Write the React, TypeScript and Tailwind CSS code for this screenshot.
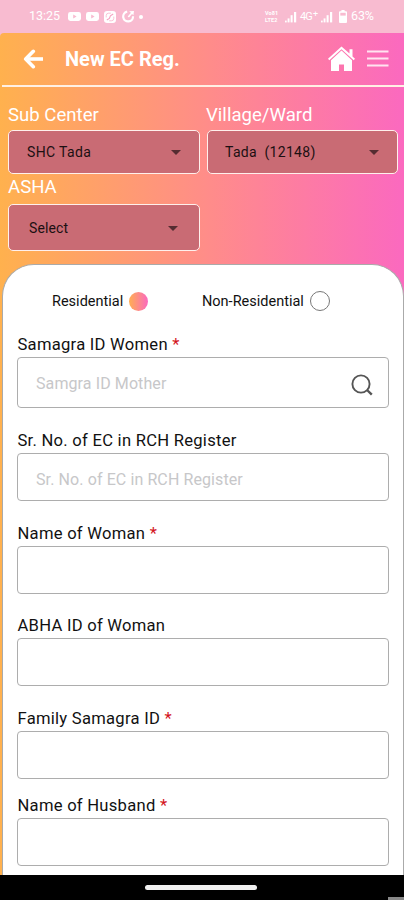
import React from "react";

function Signal({ className }: { className: string }) {
  return (
    <svg className={className} viewBox="0 0 12 12" fill="white">
      <rect x="0" y="9.6" width="1.7" height="1.8" />
      <rect x="2.6" y="7.4" width="1.9" height="4" />
      <rect x="5.6" y="4.2" width="2" height="7.2" />
      <rect x="9" y="1" width="2.2" height="10.4" />
    </svg>
  );
}

function YouTube({ className }: { className: string }) {
  return (
    <svg className={className} viewBox="0 0 13 9">
      <rect width="13" height="9" rx="2.4" fill="white" />
      <path d="M5.2 2.6 8.6 4.5 5.2 6.4Z" fill="#f8bbd0" />
    </svg>
  );
}

function StatusBar() {
  return (
    <div className="flex h-[33px] shrink-0 items-center bg-[#f8bbd0] pl-[29px] text-white">
      <span className="w-[39px] text-[12.5px] leading-none">13:25</span>
      <YouTube className="h-[9px] w-[13px]" />
      <YouTube className="ml-[5px] h-[9px] w-[13px]" />
      <svg className="ml-[5px] h-3 w-3" viewBox="0 0 12 12" fill="none">
        <rect width="12" height="12" rx="3.2" fill="white" />
        <path d="M2.2 6.4V4.6Q2.2 2.2 4.6 2.2H6.8M9.8 5.6v1.8Q9.8 9.8 7.4 9.8H5.2" stroke="#f8bbd0" strokeWidth="0.9" />
        <path d="M2.8 9 5.4 7.4 6.4 4.8 9.2 3" stroke="#f5a3c2" strokeWidth="1.1" />
      </svg>
      <svg className="ml-[6px] h-[13px] w-[13px]" viewBox="0 0 13 13" fill="none" stroke="white">
        <path d="M5.2 1.7A4.9 4.9 0 1 0 11 6.2" strokeWidth="2.2" />
        <path d="M6.3 7 9.8 3" strokeWidth="1.7" />
        <path d="M7.2 1.2 12 1 11.4 5.2Z" fill="white" stroke="none" />
      </svg>
      <span className="ml-[4px] h-1 w-1 rounded-full bg-white" />
      <div className="ml-[122px] flex w-[14px] flex-col text-[5.5px] leading-[6.5px] font-bold">
        <span className="tracking-[0.1px]">Vo81</span>
        <span className="tracking-[0.1px]">LTE2</span>
      </div>
      <Signal className="ml-[6px] h-3 w-3" />
      <div className="ml-[3px] flex w-[17px] items-center leading-none">
        <span className="text-[11px] tracking-[-0.9px]">4G</span>
        <span className="mb-[5px] ml-[1px] text-[9px] leading-none">+</span>
      </div>
      <Signal className="ml-[4px] h-3 w-3" />
      <svg className="ml-[6px] h-[13px] w-2" viewBox="0 0 8 13">
        <path d="M2.4 0h3.2v1.2H7q1 0 1 1V12q0 1-1 1H1q-1 0-1-1V2.2q0-1 1-1h1.4Z" fill="white" />
        <rect x="1.3" y="2.8" width="5.4" height="2.8" fill="#f8bbd0" />
      </svg>
      <span className="ml-[4px] text-[12.5px] leading-none tracking-[-0.1px]">63%</span>
    </div>
  );
}

function Header() {
  return (
    <header className="ml-[2px] flex h-[54px] items-center border-b-2 border-[#fff0e4] pl-[21px]">
      <svg className="h-[20px] w-[20px]" viewBox="0 0 20 20" fill="none" stroke="white" strokeWidth="3.6" strokeLinecap="round" strokeLinejoin="round">
        <path d="M10.3 2.3 2.7 10l7.6 7.7" />
        <path d="M3.2 10h16.8" strokeLinecap="butt" strokeWidth="3.6" />
      </svg>
      <h1 className="ml-[22px] w-[263px] text-[20px] leading-none font-bold text-white">New EC Reg.</h1>
      <svg className="h-[26px] w-[27px]" viewBox="0 0 27 26" fill="white">
        <path d="M13.5 0.4 0 12.8l1.3 1.4L13.5 3.2l12.2 11 1.3-1.4-2.5-2.3V3.2h-3v4.4Z" />
        <path d="M13.5 4.6 3 14.2V25h8v-6.6h5V25h8V14.2Z" />
      </svg>
      <svg className="ml-[12px] h-[18px] w-[22px]" viewBox="0 0 22 18" stroke="#ffe3f0" strokeWidth="2.2">
        <path d="M0 1.5h21.5M0 8.5h21.5M0 15.5h21.5" />
      </svg>
    </header>
  );
}

function Select({ value, className }: { value: string; className: string }) {
  return (
    <div className={"flex items-center justify-between rounded-[5px] border-[1.5px] border-[#fff0ec] bg-[#c96b74] text-[14px] text-[#1c1012] " + className}>
      <span className="whitespace-pre">{value}</span>
      <span className="h-0 w-0 border-x-[5px] border-t-[5px] border-x-transparent border-t-[#552c31]" />
    </div>
  );
}

type FieldProps = { label: string; required?: boolean; placeholder?: string; search?: boolean; box: string; gap: string };

const fields: FieldProps[] = [
  { label: "Samagra ID Women", required: true, placeholder: "Samgra ID Mother", search: true, box: "h-[51px] pt-[2px]", gap: "mb-[21px]" },
  { label: "Sr. No. of EC in RCH Register", placeholder: "Sr. No. of EC in RCH Register", box: "h-[48px] pt-[5px]", gap: "mb-[21px]" },
  { label: "Name of Woman", required: true, box: "h-[48px]", gap: "mb-[20px]" },
  { label: "ABHA ID of Woman", box: "h-[48px]", gap: "mb-[21px]" },
  { label: "Family Samagra ID", required: true, box: "h-[48px]", gap: "mb-[15px]" },
  { label: "Name of Husband", required: true, box: "h-[48px]", gap: "mb-0" },
];

function Field({ label, required, placeholder, search, box, gap }: FieldProps) {
  return (
    <div className={gap}>
      <div className="h-[24px] pl-[0.5px] text-[16.6px] leading-[24px] tracking-[0.26px] text-[#111]">
        {label}
        {required && <span className="text-[#d3131b]"> *</span>}
      </div>
      <div className={"flex items-center justify-between rounded-[4px] border border-[#adadad] pr-[15px] pl-[18px] text-[16px] tracking-[0.1px] text-[#c7c7c9] " + box}>
        <span>{placeholder}</span>
        {search && (
          <svg className="mt-[2px] h-[22px] w-[22px]" viewBox="0 0 22 22" fill="none" stroke="#555">
            <circle cx="10" cy="10" r="8.6" strokeWidth="1.9" />
            <path d="m16 16 4.8 4.6" strokeWidth="2.4" />
          </svg>
        )}
      </div>
    </div>
  );
}

export default function App() {
  return (
    <div className="flex h-[900px] w-[404px] flex-col overflow-hidden bg-black font-[Roboto,sans-serif]">
      <StatusBar />
      <div className="h-[842px] shrink-0 bg-[#f8bbd0]">
        <main className="flex h-full flex-col rounded-tl-[4px] bg-[linear-gradient(90deg,#ffb14e_0%,#ff8c8a_52%,#fb69bf_100%)]">
          <Header />
          <section className="flex h-[177px] shrink-0 flex-col pl-[8px] text-[18.6px] text-white">
            <div className="flex gap-[6px] pt-[17px]">
              <div className="w-[192px]">
                <div className="h-[26px] leading-[22px]">Sub Center</div>
                <Select value="SHC Tada" className="h-[44px] pt-px pr-[18px] pl-[18px] tracking-[0.35px]" />
              </div>
              <div className="w-[192px]">
                <div className="h-[26px] leading-[22px]">Village/Ward</div>
                <Select value={"Tada  (12148)"} className="ml-[1px] h-[44px] pt-px pr-[18px] pl-[17px] tracking-[0.3px]" />
              </div>
            </div>
            <div className="w-[192px] pt-[2px]">
              <div className="h-[28px] leading-[22px]">ASHA</div>
              <Select value="Select" className="h-[47px] pt-px pr-[21px] pl-[20px] tracking-[0.1px]" />
            </div>
          </section>
          <section className="ml-[2px] min-h-0 flex-1 rounded-t-[32px] border border-b-0 border-[#aaa] bg-white pr-[14px] pl-[14px]">
            <div className="flex h-[68px] items-center pt-[4px] pl-[35px] text-[14.5px] text-[#111]">
              <span className="w-[77px] pt-px">Residential</span>
              <span className="h-[19px] w-[19px] rounded-full bg-[linear-gradient(90deg,#ffae52,#fb69bf)]" />
              <span className="ml-[54px] w-[108px] pt-px whitespace-nowrap">Non-Residential</span>
              <span className="h-[20px] w-[20px] rounded-full border-[1.5px] border-[#777]" />
            </div>
            {fields.map((f) => (
              <Field key={f.label} {...f} />
            ))}
          </section>
        </main>
      </div>
      <div className="flex h-[25px] shrink-0 items-end justify-end bg-black">
        <span className="mr-[131px] mb-[10px] h-[5px] w-[112px] rounded-full bg-[#f0f0f0]" />
        <span className="h-[3px] w-[16px] bg-[#888]" />
      </div>
    </div>
  );
}
